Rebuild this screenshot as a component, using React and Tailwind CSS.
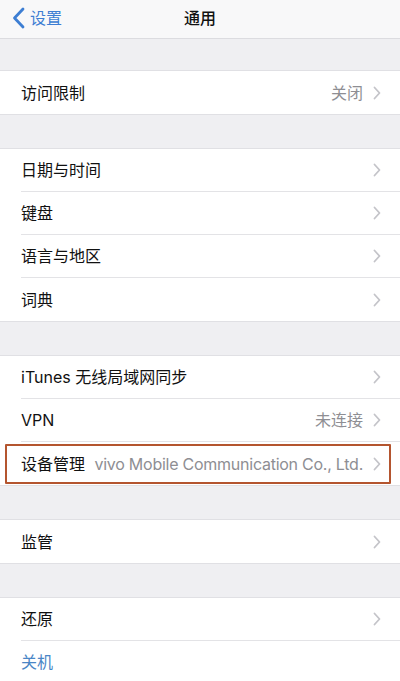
import { Fragment } from 'react'

const font = { fontFamily: 'Inter, "Noto Sans CJK SC", sans-serif' }

const groups = [
  [{ label: '访问限制', value: '关闭' }],
  [{ label: '日期与时间' }, { label: '键盘' }, { label: '语言与地区' }, { label: '词典' }],
  [
    { label: 'iTunes 无线局域网同步' },
    { label: 'VPN', value: '未连接' },
    { label: '设备管理', value: 'vivo Mobile Communication Co., Ltd.', marked: true },
  ],
  [{ label: '监管' }],
]

function Chevron() {
  return (
    <svg width="8" height="14" viewBox="0 0 8 14" className="shrink-0">
      <polyline points="1.5,1.5 6.5,7 1.5,12.5" fill="none" stroke="#c4c4c9" strokeWidth="1.8" strokeLinecap="round" strokeLinejoin="round" />
    </svg>
  )
}

function Row({ item, last }) {
  return (
    <div className="relative h-[43px] pl-[21px] bg-white">
      <div className={`h-full flex items-center pr-[19px] ${last ? '' : 'border-b border-[#e3e3e6]'}`}>
        <span className="text-[16px] text-[#111] whitespace-nowrap">{item.label}</span>
        <span
          className={`flex-1 min-w-0 text-right text-[16px] text-[#8e8e93] whitespace-nowrap pl-[8px] pr-[10px] ${
            item.marked ? 'tracking-[-0.25px]' : ''
          }`}
        >
          {item.value}
        </span>
        <Chevron />
      </div>
      {/* highlight frame over the device management row */}
      {item.marked && (
        <div className="absolute left-[5px] right-[9px] top-[2px] bottom-[1px] border-2 border-[#b4552f] rounded-[1px] pointer-events-none" />
      )}
    </div>
  )
}

export default function App() {
  return (
    <div className="w-[400px] h-[681px] overflow-hidden bg-[#efeff2]" style={font}>
      {/* Navigation bar */}
      <div className="relative h-[39px] bg-[#f8f8f9] border-b border-[#dcdce0] flex items-center">
        <div className="flex items-center pl-[12px] pb-[3px] text-[#3d7ed3]">
          <svg width="13" height="22" viewBox="0 0 13 22">
            <polyline points="11,2 2.5,11 11,20" fill="none" stroke="#3d7ed3" strokeWidth="2.8" strokeLinecap="round" strokeLinejoin="round" />
          </svg>
          <span className="ml-[5px] text-[16px] leading-none">设置</span>
        </div>
        <div className="absolute inset-0 pb-[3px] flex items-center justify-center text-[16px] font-medium text-[#111] pointer-events-none">
          通用
        </div>
      </div>

      <div className="h-[31px]" />

      {groups.map((group, gi) => (
        <Fragment key={gi}>
          <div className="border-y border-[#e0e0e4]">
            {group.map((item, i) => (
              <Row key={item.label} item={item} last={i === group.length - 1} />
            ))}
          </div>
          <div className="h-[33px]" />
        </Fragment>
      ))}

      <div className="border-t border-[#e0e0e4] bg-white">
        <Row item={{ label: '还原' }} />
        <div className="h-[41px] pl-[21px] flex items-center text-[16px] text-[#4a86c6]">关机</div>
      </div>
    </div>
  )
}
